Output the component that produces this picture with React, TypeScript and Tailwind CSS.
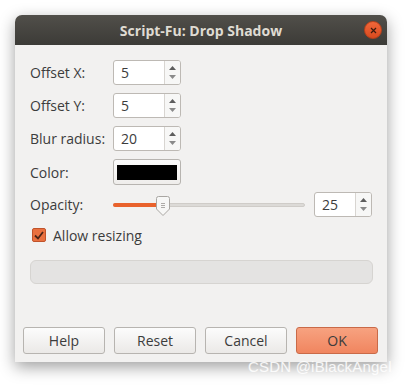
import React from "react";

const font = { fontFamily: '"Open Sans", "DejaVu Sans", sans-serif' };

function Spin({ value, w }: { value: string; w: string }) {
  return (
    <div className={`flex h-[25px] ${w} rounded-[3px] border border-[#bdb9b4] bg-white overflow-hidden`}>
      <div className="flex-1 flex items-center pl-[7px] text-[14px] text-[#3c3c3c]">{value}</div>
      <div className="w-[16px] border-l border-[#d8d5d1] bg-[#f7f7f6] flex flex-col items-center justify-center gap-[5px]">
        <svg width="7" height="4" viewBox="0 0 7 4"><path d="M0 4 L3.5 0 L7 4 Z" fill="#5d5d5d" /></svg>
        <svg width="7" height="4" viewBox="0 0 7 4"><path d="M0 0 L3.5 4 L7 0 Z" fill="#8a8a8a" /></svg>
      </div>
    </div>
  );
}

function Btn({ label, ok }: { label: string; ok?: boolean }) {
  return (
    <div
      className={`w-[82px] h-[27px] rounded-[3px] border flex items-center justify-center text-[14px] text-[#3c3c3c] ${
        ok
          ? "border-[#c96a48] bg-gradient-to-b from-[#f7a280] to-[#f0855f]"
          : "border-[#b7b4b0] bg-gradient-to-b from-[#fcfcfc] to-[#ebe9e7]"
      }`}
    >
      {label}
    </div>
  );
}

export default function App() {
  return (
    <div className="relative w-[412px] h-[387px] bg-white overflow-hidden" style={font}>
      <div className="absolute left-[15px] top-[15px] w-[372px] h-[347px] rounded-t-[7px] bg-[#f2f1f0] shadow-[0_5px_16px_rgba(0,0,0,0.38)] flex flex-col overflow-hidden">
        <div className="h-[30px] bg-gradient-to-b from-[#514f4a] to-[#3c3b37] flex items-center justify-center relative">
          <span className="text-[14px] font-bold text-[#dfdbd2]">Script-Fu: Drop Shadow</span>
          <div className="absolute right-[5px] top-[6px] w-[18px] h-[18px] rounded-full bg-gradient-to-b from-[#f0673a] to-[#d94a1e] border border-[#b8401b] flex items-center justify-center">
            <svg width="7" height="7" viewBox="0 0 7 7"><path d="M1 1 L6 6 M6 1 L1 6" stroke="#3a1a0e" strokeWidth="1.2" /></svg>
          </div>
        </div>
        <div className="flex-1 flex flex-col pl-[15px] pr-[14px] pt-[15px]">
          <div className="flex flex-col gap-[8px] text-[14px] text-[#3c3c3c]">
            <div className="flex items-center h-[25px]"><div className="w-[83px]">Offset X:</div><Spin value="5" w="w-[68px]" /></div>
            <div className="flex items-center h-[25px]"><div className="w-[83px]">Offset Y:</div><Spin value="5" w="w-[68px]" /></div>
            <div className="flex items-center h-[25px]"><div className="w-[83px]">Blur radius:</div><Spin value="20" w="w-[68px]" /></div>
            <div className="flex items-center h-[26px]">
              <div className="w-[83px]">Color:</div>
              <div className="w-[68px] h-[26px] rounded-[3px] border border-[#b7b4b0] bg-gradient-to-b from-[#fcfcfc] to-[#efedeb] flex items-center justify-center">
                <div className="w-[60px] h-[15px] bg-black" />
              </div>
            </div>
          </div>
          <div className="flex items-center h-[25px] mt-[7px] text-[14px] text-[#3c3c3c]">
            <div className="w-[83px]">Opacity:</div>
            <div className="relative w-[192px] h-[20px] flex items-center">
              <div className="w-full h-[4px] rounded-full bg-[#dcdad7] border border-[#cfccc8]" />
              <div className="absolute left-0 top-[8px] w-[50px] h-[4px] rounded-full bg-[#e9622c]" />
              <svg className="absolute left-[43px] top-[1px]" width="14" height="20" viewBox="0 0 14 20">
                <path d="M2.5 0.5 H11.5 Q13.5 0.5 13.5 2.5 V13 L7 19.5 L0.5 13 V2.5 Q0.5 0.5 2.5 0.5 Z" fill="#f7f7f6" stroke="#a9a6a2" />
                <path d="M5 7.5 H9 M5 9.5 H9 M5 11.5 H9" stroke="#9a9794" strokeWidth="0.8" />
              </svg>
            </div>
            <div className="ml-[9px]"><Spin value="25" w="w-[58px]" /></div>
          </div>
          <div className="flex items-center mt-[10px] h-[16px] text-[14px] text-[#3c3c3c]">
            <div className="ml-[2px] w-[14px] h-[14px] rounded-[2px] bg-[#e9703f] border border-[#c0532a] flex items-center justify-center">
              <svg width="10" height="9" viewBox="0 0 10 9"><path d="M1 4.5 L4 7.5 L9 1" stroke="#4b2517" strokeWidth="1.8" fill="none" /></svg>
            </div>
            <span className="ml-[7px]">Allow resizing</span>
          </div>
          <div className="mt-[17px] h-[24px] rounded-[6px] bg-[#e4e3e2] border border-[#d6d4d1]" />
        </div>
        <div className="flex gap-[9px] pl-[8px] pb-[8px]">
          <Btn label="Help" />
          <Btn label="Reset" />
          <Btn label="Cancel" />
          <Btn label="OK" ok />
        </div>
      </div>
      <div className="absolute left-[248px] top-[356px] text-[15px] text-white/85 tracking-[0.2px]" style={{ fontFamily: '"Liberation Sans", sans-serif' }}>
        CSDN @iBlackAngel
      </div>
    </div>
  );
}
